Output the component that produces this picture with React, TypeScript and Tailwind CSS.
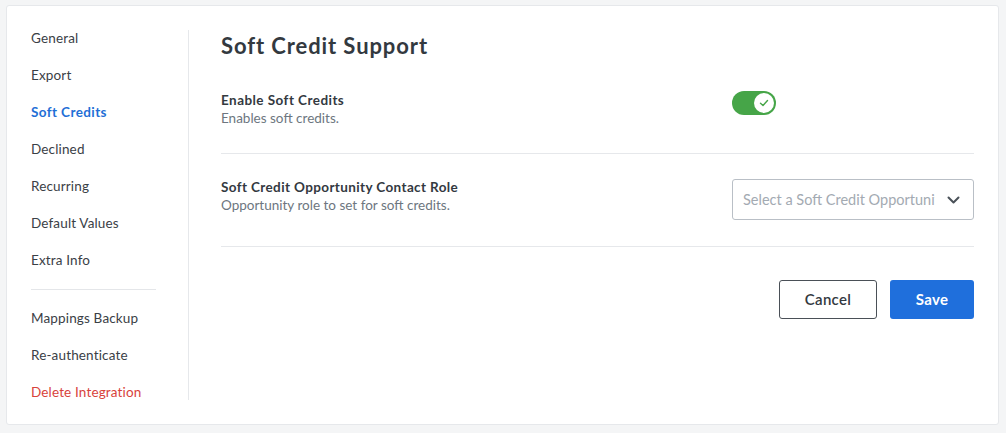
import React from "react";

export default function App() {
  const items = ["General", "Export", "Soft Credits", "Declined", "Recurring", "Default Values", "Extra Info"];
  return (
    <div className="w-[1006px] h-[433px] bg-[#f4f5f6] pt-[5px] pl-[6px]" style={{ fontFamily: "Lato, 'Noto Sans', sans-serif" }}>
      <div className="w-[993px] h-[420px] bg-white border border-[#e6e8eb] rounded-[3px] flex pt-[24px] pb-[24px] pl-[24px] pr-[24px]">
        <div className="w-[158px] border-r border-[#e6e8eb] flex flex-col pr-[32px] text-[13.5px] leading-4 text-[#3a4046] tracking-[0.15px]">
          <div className="flex flex-col gap-[21px]">
            {items.map((t) => (
              <div key={t} className={t === "Soft Credits" ? "font-bold text-[#1f6fd6] tracking-[0.4px]" : ""}>{t}</div>
            ))}
          </div>
          <div className="h-px shrink-0 bg-[#e4e6e9] mt-[21px] mb-[20px]" />
          <div className="flex flex-col gap-[21px]">
            <div>Mappings Backup</div>
            <div>Re-authenticate</div>
            <div className="text-[#d8423b]">Delete Integration</div>
          </div>
        </div>
        <div className="flex-1 pl-[32px] text-[#33393f]">
          <h1 className="text-[22px] leading-8 font-bold tracking-[0.9px]">Soft Credit Support</h1>
          <div className="flex items-start mt-[29px] pb-[26px] border-b border-[#e6e8eb]">
            <div className="flex-1 text-[13.5px] leading-[18px]">
              <div className="font-bold tracking-[0.45px]">Enable Soft Credits</div>
              <div className="text-[#6d7680]">Enables soft credits.</div>
            </div>
            <div className="w-[242px]">
              <div className="w-[44px] h-[24px] rounded-full bg-[#46a548] flex items-center justify-end pr-[2px]">
                <div className="w-[20px] h-[20px] rounded-full bg-white flex items-center justify-center">
                  <svg width="10" height="10" viewBox="0 0 10 10" fill="none">
                    <path d="M1.5 5.2 L4 7.5 L8.5 2.5" stroke="#46a548" strokeWidth="1.4" strokeLinecap="round" strokeLinejoin="round" />
                  </svg>
                </div>
              </div>
            </div>
          </div>
          <div className="flex items-start pt-[24px] pb-[26px] border-b border-[#e6e8eb]">
            <div className="flex-1 text-[13.5px] leading-[18px]">
              <div className="font-bold tracking-[0.38px]">Soft Credit Opportunity Contact Role</div>
              <div className="text-[#6d7680]">Opportunity role to set for soft credits.</div>
            </div>
            <div className="w-[242px] h-[41px] mt-[1px] border border-[#b9bfc6] rounded-[3px] flex items-center pl-[10px] pr-[13px]">
              <div className="flex-1 overflow-hidden whitespace-nowrap text-[14.5px] text-[#a3aab2] mr-[12px]">Select a Soft Credit Opportunity Contact Role</div>
              <svg width="13" height="8" viewBox="0 0 13 8" fill="none">
                <path d="M1.5 1.5 L6.5 6.5 L11.5 1.5" stroke="#4a5158" strokeWidth="2" strokeLinecap="round" strokeLinejoin="round" />
              </svg>
            </div>
          </div>
          <div className="flex justify-end gap-[13px] mt-[33px]">
            <button className="w-[98px] h-[39px] border border-[#4a5057] rounded-[3px] bg-white text-[15px] font-semibold text-[#33393f] tracking-[0.3px]">Cancel</button>
            <button className="w-[84px] h-[39px] rounded-[3px] bg-[#1f6fdc] text-[15px] font-bold text-white tracking-[0.3px]">Save</button>
          </div>
        </div>
      </div>
    </div>
  );
}
